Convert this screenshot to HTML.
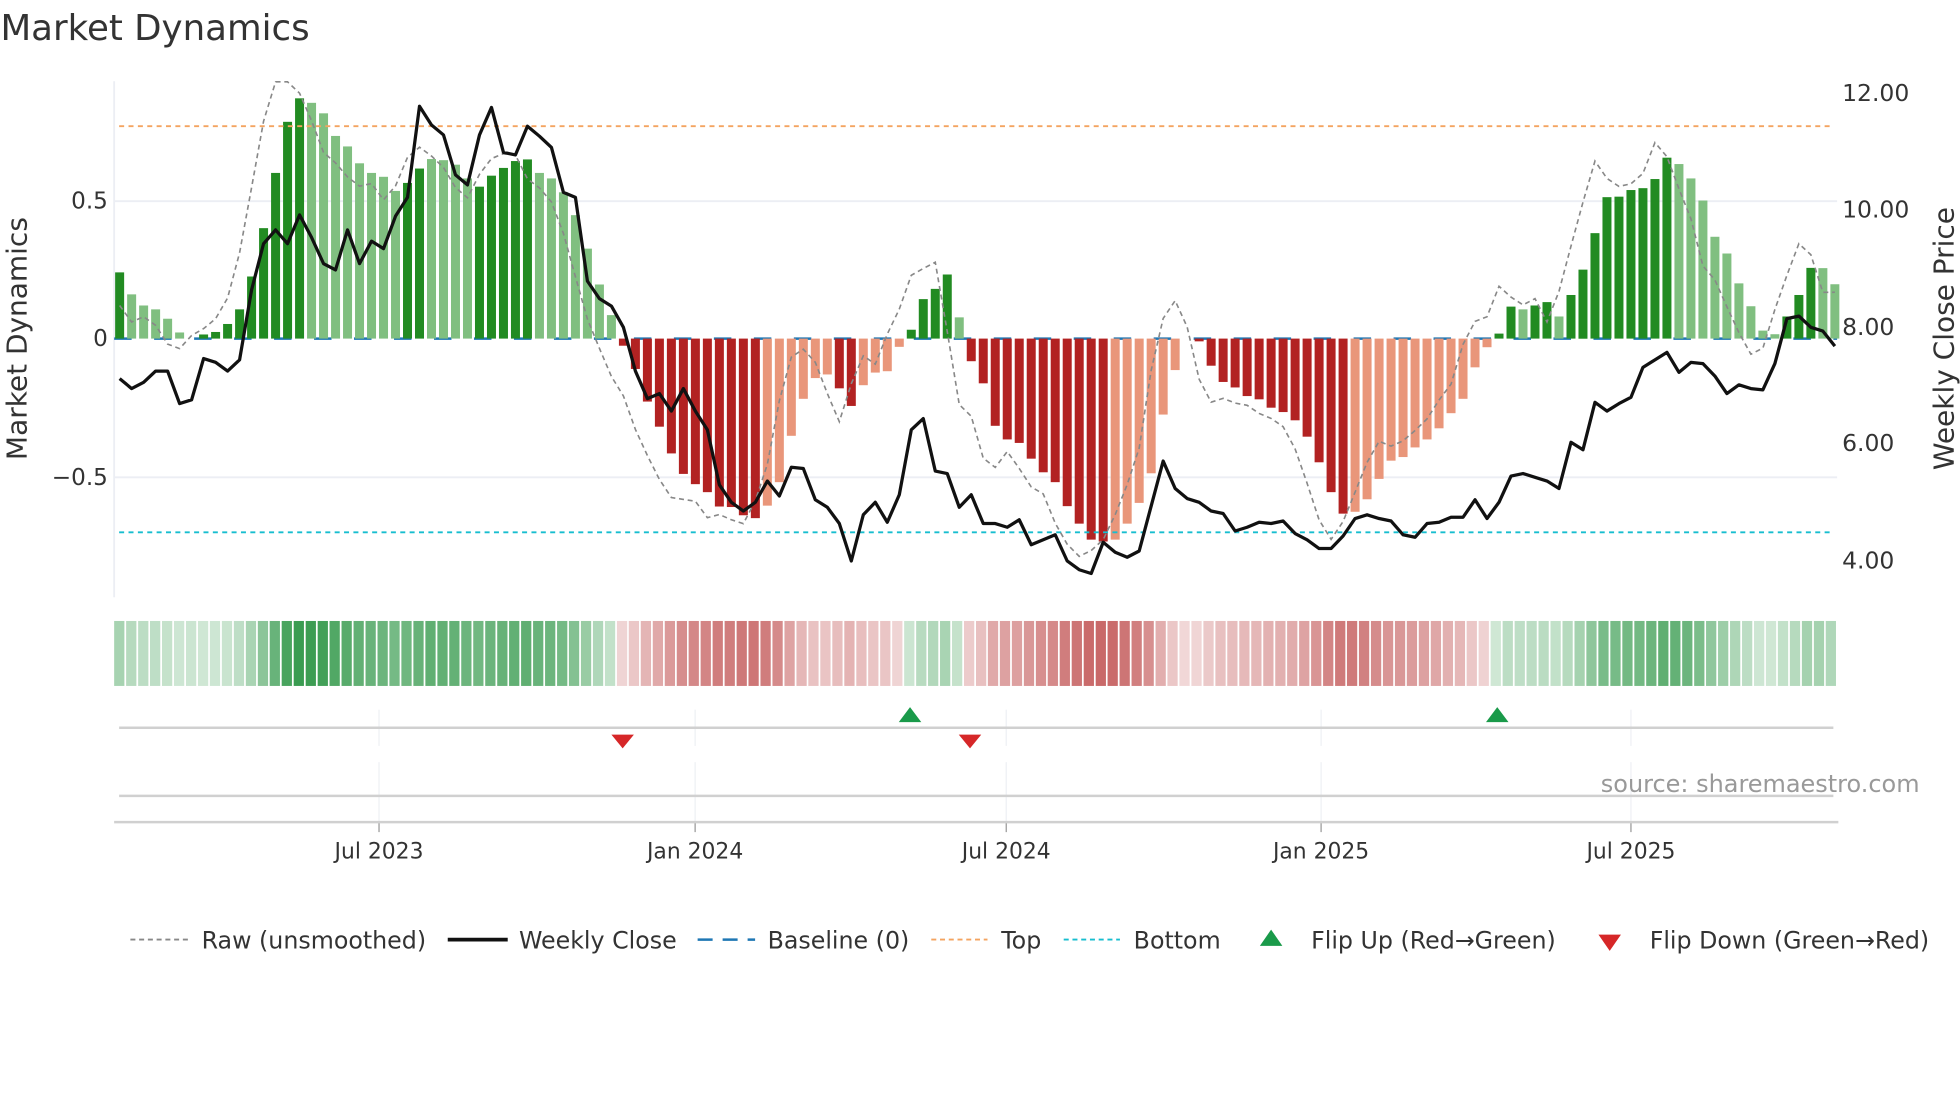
<!DOCTYPE html>
<html><head><meta charset="utf-8"><style>
html,body{margin:0;padding:0;background:#fff;}
svg{display:block;font-family:"DejaVu Sans","Liberation Sans",sans-serif;}
</style></head><body>
<svg id="s" width="1960" height="1102" viewBox="0 0 1568 882" xmlns="http://www.w3.org/2000/svg">
<rect width="1568" height="882" fill="#fff"/>
<text x="0" y="32" font-size="28.5" fill="#333">Market Dynamics</text>
<g id="g"></g>
<text x="86" y="167" font-size="18.5" fill="#333" text-anchor="end">0.5</text>
<text x="86" y="277" font-size="18.5" fill="#333" text-anchor="end">0</text>
<text x="86" y="388" font-size="18.5" fill="#333" text-anchor="end">−0.5</text>
<text x="1474" y="81" font-size="18.8" fill="#333">12.00</text>
<text x="1474" y="174" font-size="18.8" fill="#333">10.00</text>
<text x="1474" y="268" font-size="18.8" fill="#333">8.00</text>
<text x="1474" y="361" font-size="18.8" fill="#333">6.00</text>
<text x="1474" y="455" font-size="18.8" fill="#333">4.00</text>
<text transform="translate(21,271) rotate(-90)" font-size="22.4" fill="#333" text-anchor="middle">Market Dynamics</text>
<text transform="translate(1563,271) rotate(-90)" font-size="22.4" fill="#333" text-anchor="middle">Weekly Close Price</text>
<text x="1536" y="634" font-size="19.2" fill="#999" text-anchor="end">source: sharemaestro.com</text>
<g font-size="17.5" fill="#333" text-anchor="middle">
<text x="303" y="687">Jul 2023</text><text x="556" y="687">Jan 2024</text><text x="805" y="687">Jul 2024</text><text x="1057" y="687">Jan 2025</text><text x="1305" y="687">Jul 2025</text>
</g>
<g font-size="19" fill="#333">
<line x1="104" y1="752" x2="150" y2="752" stroke="#888" stroke-width="1.5" stroke-dasharray="4,3"/>
<text x="161" y="759">Raw (unsmoothed)</text>
<line x1="358" y1="752" x2="406" y2="752" stroke="#111" stroke-width="3"/>
<text x="415" y="759">Weekly Close</text>
<line x1="558" y1="752" x2="604" y2="752" stroke="#1f77b4" stroke-width="2" stroke-dasharray="12,8"/>
<text x="614" y="759">Baseline (0)</text>
<line x1="745" y1="752" x2="790" y2="752" stroke="#f4a460" stroke-width="1.5" stroke-dasharray="4,3"/>
<text x="801" y="759">Top</text>
<line x1="851" y1="752" x2="896" y2="752" stroke="#17becf" stroke-width="1.5" stroke-dasharray="4,3"/>
<text x="907" y="759">Bottom</text>
<polygon points="1017,744 1026,757 1008,757" fill="#1a9a4a"/>
<text x="1049" y="759">Flip Up (Red→Green)</text>
<polygon points="1279,748 1297,748 1288,761" fill="#d62728"/>
<text x="1320" y="759">Flip Down (Green→Red)</text>
</g>
</svg>
<script>
var v=[.24,.16,.12,.106,.072,.022,0,.015,.024,.053,.106,.225,.40,.60,.785,.87,.854,.816,.734,.696,.635,.60,.586,.535,.564,.616,.65,.646,.63,.58,.55,.59,.618,.643,.649,.60,.58,.53,.447,.326,.196,.085,-.026,-.11,-.228,-.319,-.416,-.49,-.527,-.556,-.608,-.61,-.64,-.65,-.605,-.52,-.352,-.218,-.143,-.13,-.18,-.244,-.169,-.123,-.118,-.03,.032,.143,.18,.232,.077,-.082,-.162,-.316,-.365,-.378,-.435,-.484,-.52,-.607,-.67,-.728,-.735,-.728,-.67,-.595,-.488,-.275,-.114,0,-.01,-.098,-.157,-.177,-.208,-.22,-.25,-.266,-.296,-.355,-.448,-.556,-.634,-.627,-.582,-.508,-.442,-.429,-.394,-.365,-.325,-.27,-.218,-.104,-.031,.018,.116,.106,.12,.132,.08,.158,.25,.382,.512,.514,.538,.545,.578,.655,.632,.58,.5,.369,.308,.2,.117,.029,.016,.08,.158,.256,.255,.197];
var p=[303,311,306,297,297,323,320,287,290,297,288,232,195,184,195,172,190,211,216,184,211,193,199,173,158,85,100,108,140,148,108,86,122,124,101,109,118,154,158,225,239,245,262,297,319,315,329,311,329,344,388,402,409,402,385,397,374,375,400,406,419,449,412,402,418,396,344,335,377,379,406,396,419,419,422,416,436,432,428,449,456,459,434,442,446,441,405,369,391,399,402,409,411,425,422,418,419,417,427,432,439,439,429,415,412,415,417,428,430,419,418,414,414,400,415,402,381,379,382,385,391,354,360,322,329,323,318,294,288,282,298,290,291,301,315,308,311,312,291,255,253,262,265,277];
var darkR=[[1,1],[8,16],[25,26],[31,35],[43,54],[61,62],[67,70],[72,83],[91,103],[116,117],[119,120],[122,130],[140,142]];
function dark(n){for(var k=0;k<darkR.length;k++)if(n>=darkR[k][0]&&n<=darkR[k][1])return true;return false;}
var Z=271,U=221,o='';
function X(i){return 95.4+i*9.6;}
o+='<line x1="91" y1="161" x2="1470" y2="161" stroke="#eceef4" stroke-width="1.5"/>';
o+='<line x1="91" y1="382" x2="1470" y2="382" stroke="#eceef4" stroke-width="1.5"/>';
o+='<line x1="91" y1="65" x2="91" y2="478" stroke="#eceef4" stroke-width="1.5"/>';
o+='<line x1="91" y1="271" x2="1470" y2="271" stroke="#1f77b4" stroke-width="2" stroke-dasharray="14,18"/>';
for(var i=0;i<144;i++){var a=v[i];if(a==0)continue;var d=dark(i+1);var c=a>0?(d?'#228b22':'#80bf80'):(d?'#b22222':'#e9967a');
var h=Math.abs(a)*U;var y=a>0?Z-h:Z;o+='<rect x="'+(X(i)-3.6).toFixed(1)+'" y="'+y.toFixed(1)+'" width="7.2" height="'+h.toFixed(1)+'" fill="'+c+'"/>';}
o+='<line x1="95" y1="101" x2="1466" y2="101" stroke="#f4a460" stroke-width="1.5" stroke-dasharray="4,3.5"/>';
o+='<line x1="95" y1="426" x2="1466" y2="426" stroke="#17becf" stroke-width="1.5" stroke-dasharray="4,3.5"/>';
var r='';for(var i=0;i<144;i++){var a=v[Math.min(143,i+1)],b=v[Math.max(0,i-1)];var q=v[Math.min(143,i+1)]+(a-b)*0.5;if(q>0.93)q=0.93;r+=(i?'L':'M')+X(i).toFixed(1)+','+(Z-q*U).toFixed(1);}
o+='<path d="'+r+'" fill="none" stroke="#888" stroke-width="1.3" stroke-dasharray="4,3"/>';
var s='';for(var i=0;i<144;i++)s+=(i?'L':'M')+X(i).toFixed(1)+','+p[i];
o+='<path d="'+s+'" fill="none" stroke="#111" stroke-width="2.6" stroke-linejoin="round"/>';
for(var i=0;i<144;i++){var a=v[i],t=0.22+0.72*Math.min(1,Math.abs(a)/0.87);var c=a>=0?'rgb(46,150,70)':'rgb(190,75,75)';if(i==6){c='rgb(46,150,70)';t=0.25;}if(i==89){c='rgb(190,75,75)';t=0.22;}
o+='<rect x="'+(91+i*9.58).toFixed(1)+'" y="497" width="8.2" height="52" fill="'+c+'" fill-opacity="'+t.toFixed(2)+'"/>';}
var mx=[303,556,805,1057,1305];
for(var k=0;k<5;k++){o+='<line x1="'+mx[k]+'" y1="568" x2="'+mx[k]+'" y2="597" stroke="#eef0f4" stroke-width="1"/>';o+='<line x1="'+mx[k]+'" y1="610" x2="'+mx[k]+'" y2="658" stroke="#eef0f4" stroke-width="1"/>';o+='<line x1="'+mx[k]+'" y1="658" x2="'+mx[k]+'" y2="666" stroke="#999" stroke-width="1"/>';}
o+='<line x1="95" y1="582.5" x2="1467" y2="582.5" stroke="#d0d0d0" stroke-width="2"/>';
o+='<line x1="95" y1="637" x2="1467" y2="637" stroke="#d0d0d0" stroke-width="2"/>';
o+='<line x1="91" y1="658" x2="1471" y2="658" stroke="#d0d0d0" stroke-width="2"/>';
[728,1198].forEach(function(x){o+='<polygon points="'+x+',566 '+(x+9)+',578 '+(x-9)+',578" fill="#1a9a4a"/>';});
[498,776].forEach(function(x){o+='<polygon points="'+(x-9)+',588 '+(x+9)+',588 '+x+',599" fill="#d62728"/>';});
document.getElementById('g').innerHTML=o;
</script>
</body></html>
